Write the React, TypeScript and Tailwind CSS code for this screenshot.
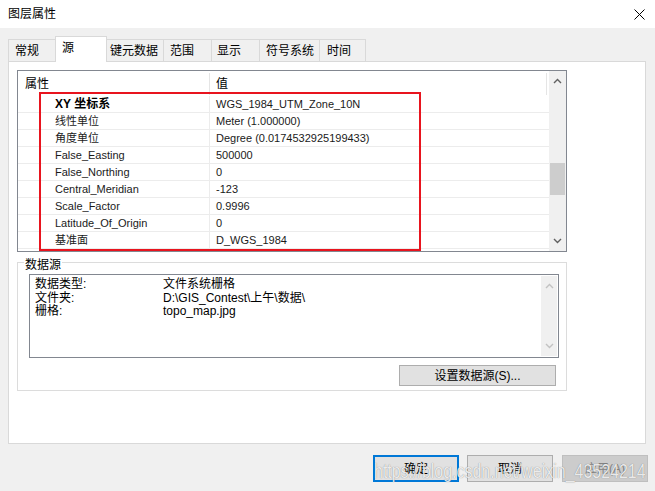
import React from "react";

const TABS: Array<{ label: string; cls: string; active?: boolean }> = [
  { label: "常规", cls: "w-[48px] pl-[6px] border-l" },
  { label: "源", cls: "w-[52px] pl-[6px]", active: true },
  { label: "键元数据", cls: "w-[57px] pl-[3px]" },
  { label: "范围", cls: "w-[48px] pl-[6px]" },
  { label: "显示", cls: "w-[48px] pl-[5px]" },
  { label: "符号系统", cls: "w-[60px] pl-[6px]" },
  { label: "时间", cls: "w-[46px] pl-[7px]" },
];

const ROWS: Array<{ name: string; value: string; bold?: boolean }> = [
  { name: "XY 坐标系", value: "WGS_1984_UTM_Zone_10N", bold: true },
  { name: "线性单位", value: "Meter (1.000000)" },
  { name: "角度单位", value: "Degree (0.0174532925199433)" },
  { name: "False_Easting", value: "500000" },
  { name: "False_Northing", value: "0" },
  { name: "Central_Meridian", value: "-123" },
  { name: "Scale_Factor", value: "0.9996" },
  { name: "Latitude_Of_Origin", value: "0" },
  { name: "基准面", value: "D_WGS_1984" },
];

const SOURCE = [
  { k: "数据类型:", v: "文件系统栅格" },
  { k: "文件夹:", v: "D:\\GIS_Contest\\上午\\数据\\" },
  { k: "栅格:", v: "topo_map.jpg" },
];

function Chevron({ up, color }: { up?: boolean; color: string }) {
  return (
    <svg width="9" height="6" viewBox="0 0 9 6">
      <path d={up ? "M1 5L4.5 1.5L8 5" : "M1 1L4.5 4.5L8 1"} fill="none" stroke={color} strokeWidth="1.4" />
    </svg>
  );
}

function Button({ label, variant }: { label: string; variant?: "default" | "disabled" }) {
  const look =
    variant === "default"
      ? "border-2 border-[#0078d7] bg-[#e1e1e1] text-black"
      : variant === "disabled"
        ? "border border-[#bfbfbf] bg-[#cccccc] text-[#838383]"
        : "border border-[#adadad] bg-[#e1e1e1] text-black";
  return <div className={`flex h-[27px] w-[86px] items-center justify-center text-[12px] ${look}`}>{label}</div>;
}

export default function App() {
  return (
    <div className="relative h-[491px] w-[655px] overflow-hidden bg-[#f0f0f0] font-['Liberation_Sans','Noto_Sans_CJK_SC',sans-serif] text-[12px] text-black">
      {/* title bar */}
      <div className="flex h-[28px] items-center justify-between bg-white pl-[8px] pr-[10px]">
        <span className="text-[12px]">图层属性</span>
        <svg width="11" height="11" viewBox="0 0 11 11">
          <path d="M0.5 0.5L10.5 10.5M10.5 0.5L0.5 10.5" stroke="#000" strokeWidth="1" />
        </svg>
      </div>

      {/* tabs */}
      <div className="flex h-[33px] items-end pl-[8px]">
        {TABS.map((t) =>
          t.active ? (
            <div key={t.label} className={`relative z-10 -mb-px -ml-px flex h-[26px] items-center border-x border-t border-[#d9d9d9] bg-white pb-[3px] ${t.cls}`}>
              {t.label}
            </div>
          ) : (
            <div key={t.label} className={`flex h-[22px] items-center border-r border-t border-[#d9d9d9] bg-[#f0f0f0] ${t.cls}`}>
              {t.label}
            </div>
          ),
        )}
      </div>

      {/* panel */}
      <div className="ml-[8px] h-[383px] w-[638px] border border-[#d9d9d9] bg-white pl-[8px] pt-[8px]">
        {/* property list */}
        <div className="flex h-[182px] w-[550px] border border-[#828790]">
          <div className="relative w-[531px] overflow-hidden">
            <div className="flex h-[25px] items-center">
              <div className="flex h-[22px] w-[192px] items-center border-r border-[#e5e5e5] pl-[7px]">属性</div>
              <div className="flex h-[22px] w-[337px] items-center border-r border-[#e5e5e5] pl-[6px]">值</div>
            </div>
            {ROWS.map((r) => (
              <div key={r.name} className="flex h-[17px] items-center border-b border-[#ececec] text-[11px] text-[#1a1a1a]">
                <div className={`flex h-full w-[192px] items-center border-r border-[#ececec] pl-[37px] ${r.bold ? "text-[12px] font-bold text-black" : ""}`}>
                  {r.name}
                </div>
                <div className="pl-[6px]">{r.value}</div>
              </div>
            ))}
            <div className="absolute left-[21px] top-[21px] h-[159px] w-[382px] border-2 border-[#e8141e]" />
          </div>
          <div className="flex w-[17px] flex-col bg-[#f0f0f0]">
            <div className="flex h-[20px] items-center justify-center">
              <Chevron up color="#606060" />
            </div>
            <div className="flex-1">
              <div className="mx-auto mt-[72px] h-[32px] w-[15px] bg-[#cdcdcd]" />
            </div>
            <div className="flex h-[20px] items-center justify-center">
              <Chevron color="#606060" />
            </div>
          </div>
        </div>

        {/* data source group */}
        <div className="relative mt-[10px] h-[129px] w-[550px] border border-[#dcdcdc] pt-[11px]">
          <span className="absolute left-[6px] top-[-6px] bg-white px-[1px] leading-[16px]">数据源</span>
          <div className="ml-[11px] flex h-[84px] w-[530px] border border-[#828790]">
            <div className="flex-1 pl-[5px] pt-[3px] leading-[13.5px]">
              {SOURCE.map((s) => (
                <div key={s.k} className="flex">
                  <span className="w-[128px]">{s.k}</span>
                  <span>{s.v}</span>
                </div>
              ))}
            </div>
            <div className="my-px mr-px flex w-[16px] flex-col justify-between bg-[#f0f0f0] py-[7px]">
              <div className="flex justify-center">
                <Chevron up color="#c2c2c2" />
              </div>
              <div className="flex justify-center">
                <Chevron color="#c2c2c2" />
              </div>
            </div>
          </div>
          <div className="mt-[7px] flex justify-end pr-[10px]">
            <div className="flex h-[21px] w-[157px] items-center justify-center border border-[#adadad] bg-[#e1e1e1]">设置数据源(S)...</div>
          </div>
        </div>
      </div>

      {/* dialog buttons */}
      <div className="mt-[11px] flex justify-end gap-[8px] pr-[7px]">
        <Button label="确定" variant="default" />
        <Button label="取消" />
        <div className="ml-px">
          <Button label="应用(A)" variant="disabled" />
        </div>
      </div>

      {/* watermark */}
      <div className="pointer-events-none absolute left-[374px] top-[455px] origin-left scale-x-[0.76] whitespace-nowrap text-[21px] text-white/85 [text-shadow:0_0_1px_rgba(0,0,0,0.5)]">
        https://blog.csdn.net/weixin_43524214
      </div>
    </div>
  );
}
